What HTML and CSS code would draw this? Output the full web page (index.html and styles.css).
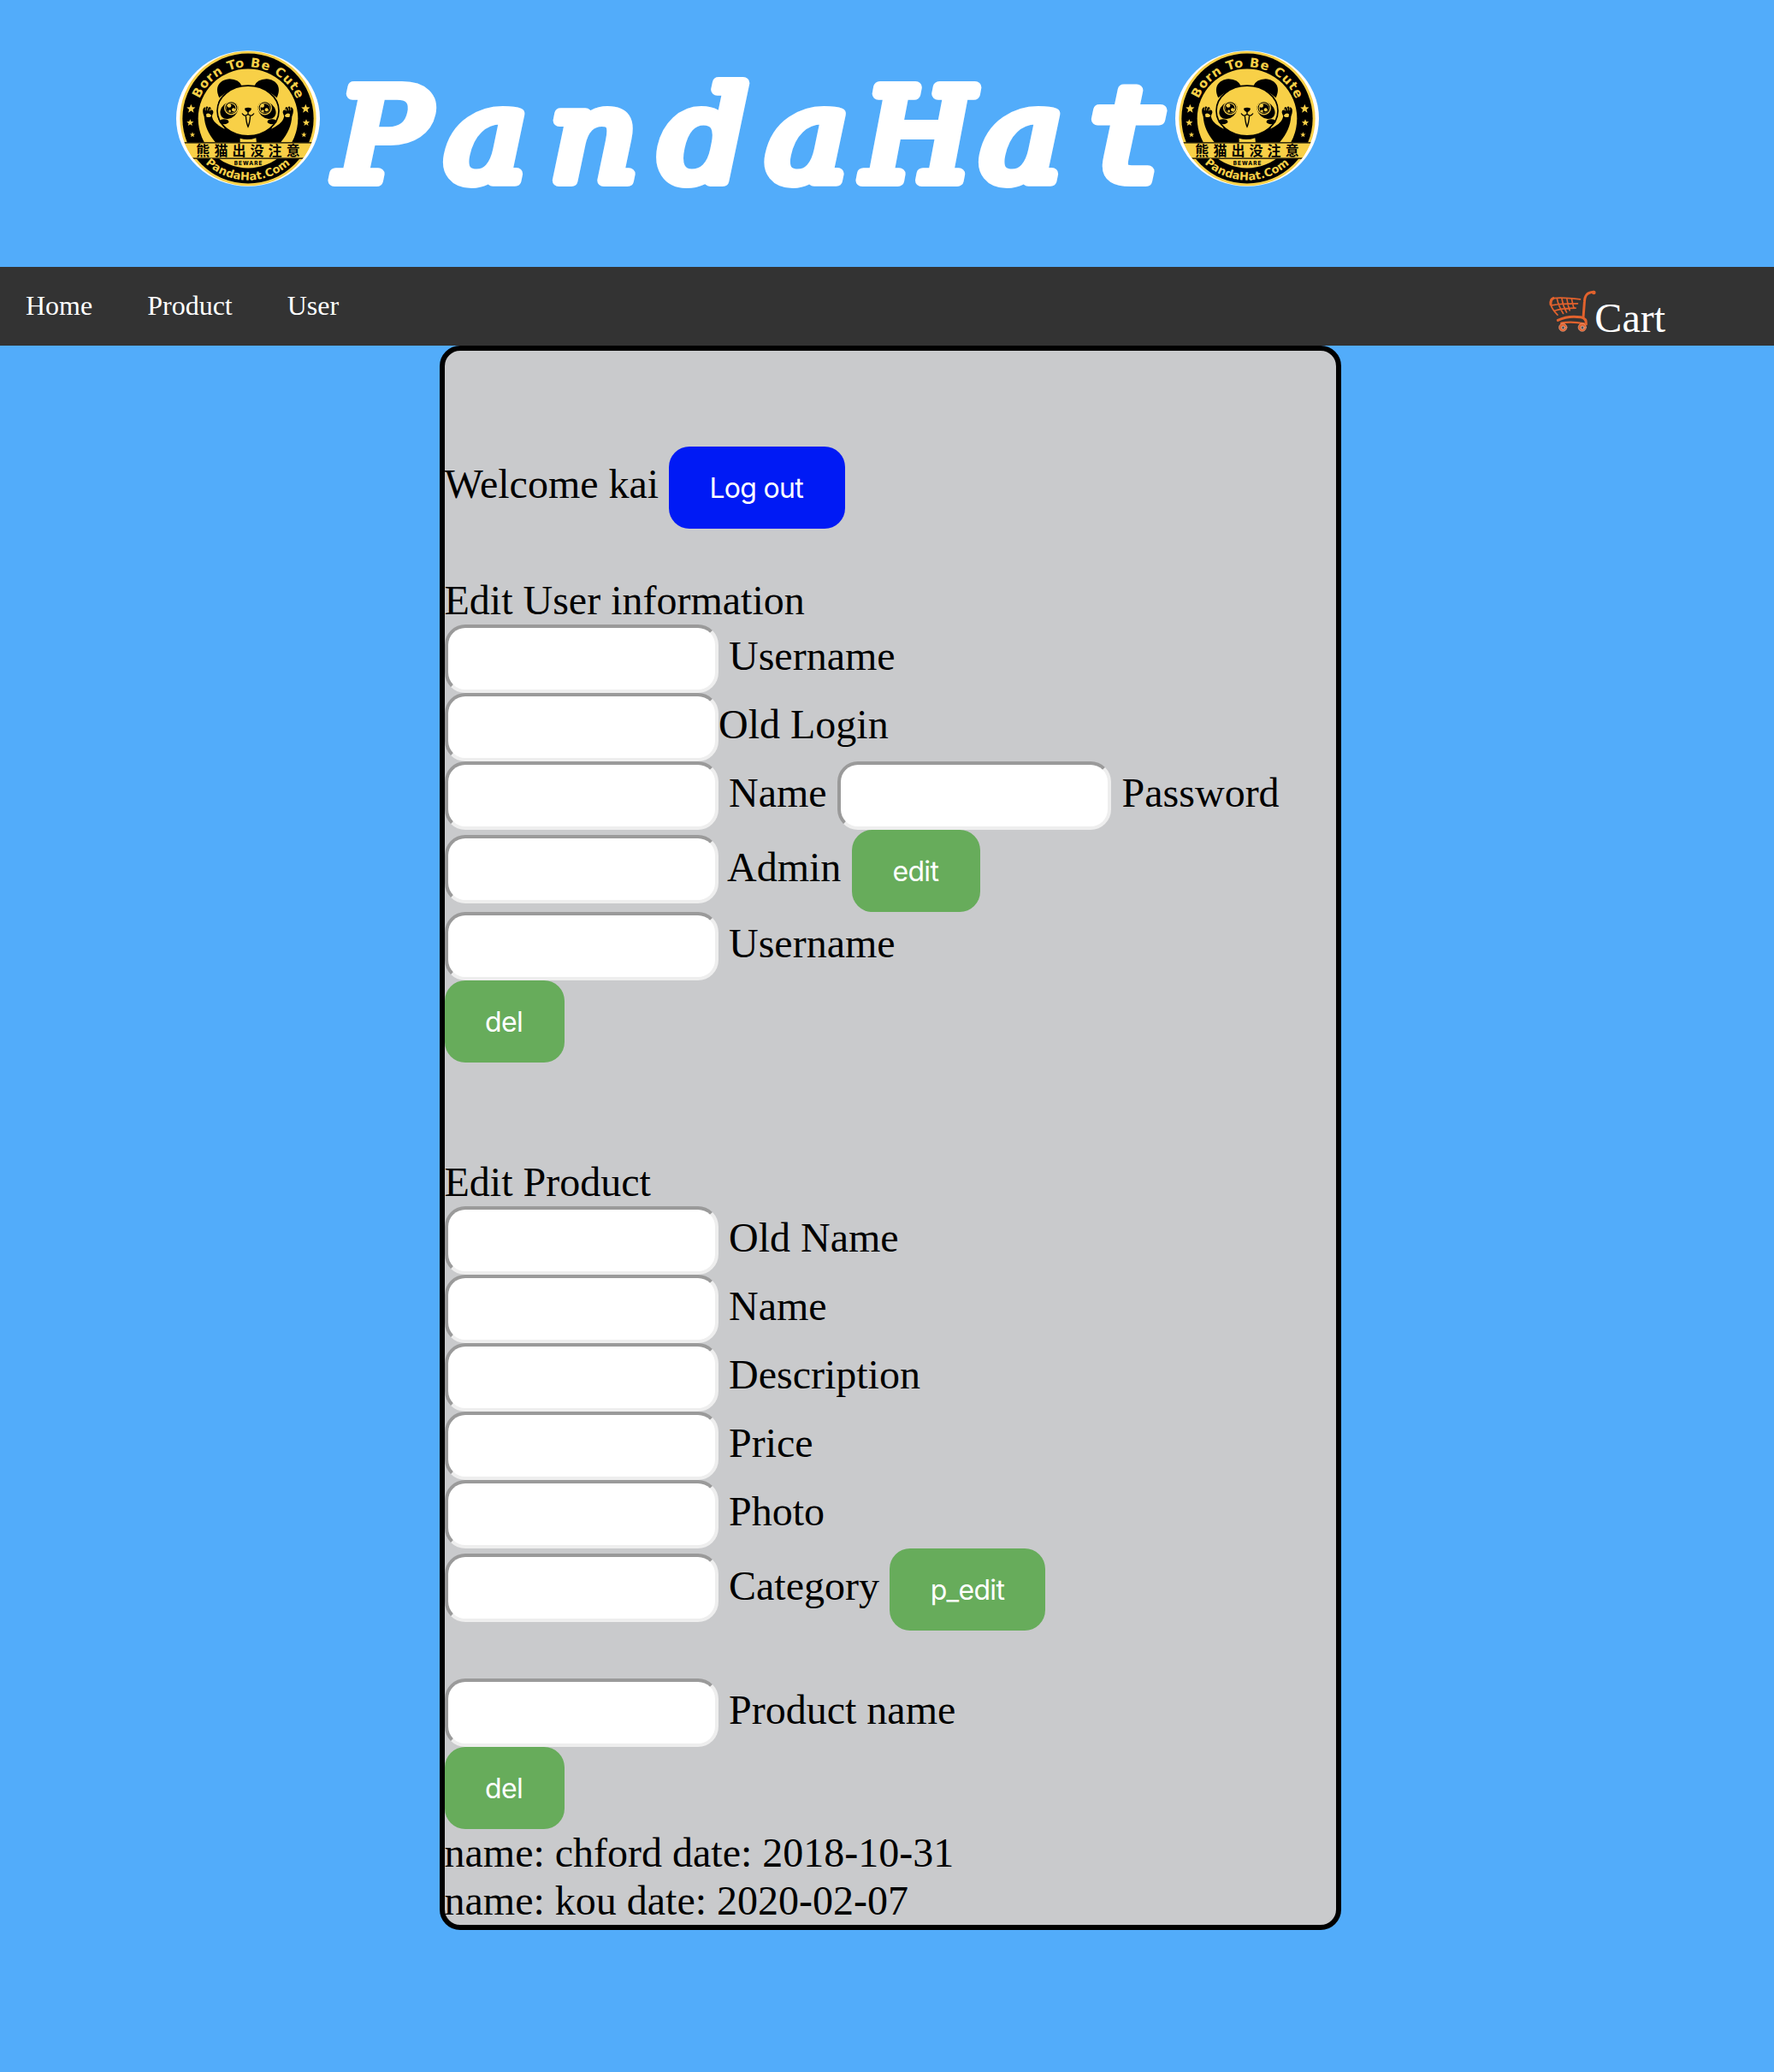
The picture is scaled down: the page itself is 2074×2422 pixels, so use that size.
FILE: index.html
```html
<!DOCTYPE html>
<html lang="en">
<head>
<meta charset="utf-8">
<title>PandaHat</title>
<link rel="stylesheet" href="styles.css">
</head>
<body>
<svg width="0" height="0" class="defs" aria-hidden="true">
  <defs>
    <path id="arc-top" d="M130 227A185 185 0 0 1 470 227"/>
    <path id="arc-bottom" d="M150 454A222 222 0 0 0 450 454"/>
    <path id="star" d="M0-16L4.2-5.5L15.4-5L6.7 2.4L9.6 13.4L0 7L-9.6 13.4L-6.7 2.4L-15.4-5L-4.2-5.5Z"/>
    <clipPath id="disc"><ellipse cx="300" cy="296" rx="239" ry="236"/></clipPath>
    <g id="side">
      <path d="M146 289C140 275 140 262 146 258Q149 253 152 263Q151 252 156 254Q161 254 161 263Q163 253 168 257Q171 260 169 268Q176 263 178 272C179 280 172 284 174 291C178 310 198 323 222 334L262 380H186C160 350 148 320 146 289Z"/>
      <path class="gold" d="M153 281Q163 273 172 286Q166 295 154 290Z"/>
      <path class="gold" d="M151 268L150 260M158 268V259M165 270L167 262" stroke="#f8d047" stroke-width="2"/>
      <path d="M199 223C181 186 199 160 235 157Q269 158 278 182Q231 195 199 223Z"/>
    </g>
    <g id="eye">
      <ellipse cx="234" cy="267" rx="35" ry="27" transform="rotate(-42 234 267)"/>
      <ellipse cx="216" cy="307" rx="16" ry="9"/>
      <circle class="gold" cx="241" cy="259" r="25"/>
      <circle cx="241" cy="259" r="21"/>
      <circle class="gold" cx="241" cy="259" r="18"/>
      <circle cx="240" cy="260" r="16"/>
    </g>
    <symbol id="panda" viewBox="48 58 504 476">
      <ellipse cx="300" cy="296" rx="252" ry="238" fill="#fff"/>
      <ellipse class="gold" cx="300" cy="296" rx="239" ry="236"/>
      <ellipse cx="300" cy="296" rx="230" ry="228"/>
      <ellipse class="gold" cx="300" cy="296" rx="175" ry="174"/>
      <use href="#side"/>
      <use href="#side" transform="matrix(-1 0 0 1 600 0)"/>
      <path d="M215 325H385L362 382H238Z"/>
      <path class="gold" d="M272 366Q300 374 328 364L330 382H272Z"/>
      <ellipse class="gold" cx="300" cy="269" rx="108" ry="88" stroke="#000" stroke-width="5"/>
      <use href="#eye"/>
      <use href="#eye" transform="matrix(-1 0 0 1 600 0)"/>
      <g class="gold">
        <circle cx="234" cy="251" r="7"/><circle cx="249" cy="265" r="6"/><circle cx="236" cy="270" r="4"/>
        <circle cx="350" cy="251" r="7"/><circle cx="365" cy="265" r="6"/><circle cx="352" cy="270" r="4"/>
      </g>
      <path d="M288 261Q300 255 312 261Q311 271 300 274Q289 271 288 261Z"/>
      <path d="M300 272V281M279 278Q288 292 300 281Q312 292 321 278M292 285Q294 312 300 325Q306 312 308 285" fill="none" stroke="#000" stroke-width="4"/>
      <g clip-path="url(#disc)">
        <path class="gold" d="M48 380H552L520 437H80Z"/>
        <path d="M48 381H552M104 436H496" stroke="#000" stroke-width="4"/>
      </g>
      <g class="gold">
        <use href="#star" x="100" y="262"/><use href="#star" x="502" y="262"/>
        <use href="#star" transform="translate(97 311) scale(.8)"/><use href="#star" transform="translate(504 311) scale(.8)"/>
        <use href="#star" transform="translate(105 353) scale(.6)"/><use href="#star" transform="translate(496 353) scale(.6)"/>
      </g>
      <text class="badge-arc gold" font-size="44"><textPath href="#arc-top" textLength="432" lengthAdjust="spacing">Born To Be Cute</textPath></text>
      <text class="badge-arc gold" font-size="39"><textPath href="#arc-bottom" textLength="327" lengthAdjust="spacing">PandaHat.Com</textPath></text>
      <text class="badge-cjk" x="118" y="427" textLength="364">熊猫出没注意</text>
      <text class="badge-beware" x="251" y="459" textLength="98">BEWARE</text>
    </symbol>
  </defs>
</svg>

<header class="banner">
  <svg class="logo"><use href="#panda"/></svg>
  <h1 class="title">
    <svg class="wordmark" viewBox="0 0 1000 200">
      <text transform="scale(1.08 1)" x="68.5 180 296.5 416 527.5 648 759.5 873" y="152">Panda<tspan class="cap-h">H</tspan>a<tspan class="tee">t</tspan></text>
    </svg>
  </h1>
  <svg class="logo"><use href="#panda"/></svg>
</header>

<nav class="nav">
  <a>Home</a>
  <a>Product</a>
  <a>User</a>
  <a class="cart">
    <svg class="cart-icon" viewBox="94 88 164 148" fill="none" stroke="#e2622d" stroke-linecap="round">
      <circle cx="251" cy="97" r="7" fill="#e2622d" stroke="none"/>
      <path d="M250 95C226 97 219 108 218 130L214 183" stroke-width="9"/>
      <path d="M203 121C165 116 130 114 108 117Q95 120 98 137Q103 156 123 176" stroke-width="5"/>
      <path d="M108 117Q98 122 99 139" stroke-width="9"/>
      <path d="M103 142C130 136 165 136 194 136M112 161C135 154 160 152 187 152M121 118Q126 145 143 171M138 118Q142 145 155 167M156 119Q159 142 166 160M173 120Q176 137 180 150" stroke-width="5"/>
      <path d="M124 195Q160 177 205 184Q226 188 224 209" stroke-width="9"/>
      <path d="M136 205Q170 197 218 207" stroke-width="7"/>
      <g stroke="#e9a58b" stroke-width="2" fill="#e2622d"><ellipse cx="142" cy="220" rx="14" ry="14"/><ellipse cx="210" cy="220" rx="14" ry="14"/></g>
      <g stroke="#f0c0ae" stroke-width="2" fill="#555"><circle cx="143" cy="221" r="6"/><circle cx="211" cy="221" r="6"/></g>
    </svg><span>Cart</span>
  </a>
</nav>

<main class="panel">
  <form class="row with-button welcome"><label>Welcome kai</label><button class="btn logout" type="button">Log out</button></form>

  <div class="line section">Edit User information</div>
  <div class="row"><input><label>Username</label></div>
  <div class="row tight"><input><label>Old Login</label></div>
  <div class="row"><input><label>Name</label><input><label>Password</label></div>
  <div class="row with-button"><input><label class="kerned">Admin</label><button class="btn edit" type="button">edit</button></div>
  <div class="row"><input><label>Username</label></div>
  <button class="btn del" type="button">del</button>

  <div class="line section far">Edit Product</div>
  <div class="row"><input><label>Old Name</label></div>
  <div class="row"><input><label>Name</label></div>
  <div class="row"><input><label>Description</label></div>
  <div class="row"><input><label>Price</label></div>
  <div class="row"><input><label>Photo</label></div>
  <div class="row with-button"><input><label>Category</label><button class="btn p-edit" type="button">p_edit</button></div>
  <div class="row section"><input><label>Product name</label></div>
  <button class="btn del" type="button">del</button>

  <div class="line">name: chford date: 2018-10-31</div>
  <div class="line">name: kou date: 2020-02-07</div>
</main>
</body>
</html>
```
FILE: styles.css
```css
* { box-sizing: border-box; }

body {
  margin: 0;
  min-height: 2422px;
  background: #52acfa;
  color: #000;
  font-family: "Liberation Serif", "Times New Roman", serif;
  font-size: 48px;
  line-height: 56px;
}

.defs { display: block; height: 0; }
.gold { fill: #f8d047; }
.badge-arc { font-family: "DejaVu Sans", sans-serif; font-weight: 700; }
.badge-cjk { font-family: "Noto Sans CJK SC", sans-serif; font-weight: 700; font-size: 48px; }
.badge-beware { font-family: Inter, sans-serif; font-weight: 800; font-size: 19px; }

/* Banner */
.banner {
  display: flex;
  height: 312px;
  padding: 59px 0 0 206px;
}
.logo { flex: none; width: 168px; height: 159px; }
.title {
  width: 1000px;
  margin: 0;
}
.wordmark {
  display: block;
  width: 1000px;
  height: 200px;
  overflow: visible;
  fill: #fff;
  stroke: #fff;
  stroke-width: 14px;
  stroke-linejoin: round;
  text-anchor: middle;
  font-family: "DejaVu Serif", serif;
  font-style: italic;
  font-weight: 400;
  font-size: 150px;
}
.wordmark .cap-h { font-family: "DejaVu Serif Condensed", "DejaVu Serif", serif; }
.wordmark .tee { font-family: "DejaVu Sans Mono", monospace; }

/* Navigation */
.nav {
  display: flex;
  height: 92px;
  padding-left: 30px;
  gap: 64px;
  background: #333;
  color: #fff;
  font-size: 32px;
  line-height: 91px;
}
.cart {
  display: flex;
  margin-left: auto;
  padding: 27px 127px 0 0;
  font-size: 48px;
  line-height: 56px;
}
.cart span { padding-top: 5px; }
.cart-icon { width: 55px; height: 49px; margin-right: -2px; }

/* Panel */
.panel {
  width: 1054px;
  height: 1852px;
  margin-left: 513.5px;
  padding-top: 112px;
  border: 6px solid #000;
  border-radius: 24px;
  background: #c9cacc;
}
.row {
  display: flex;
  align-items: flex-start;
  gap: 12.5px;
  height: 80px;
}
.row label { padding-top: 9px; white-space: nowrap; }
.row.tight { gap: .5px; }
.row.welcome { gap: 11.5px; }
.row.with-button { height: 96px; }
.row.with-button label { padding-top: 16px; }
.row.with-button input { margin-top: 6px; }
.row .kerned { margin-left: -2px; }
.line { height: 56px; }
.section { margin-top: 56px; }
.section.far { margin-top: 112px; }

input {
  flex: none;
  width: 320px;
  height: 80px;
  margin: 0;
  border: 4px solid;
  border-color: #9a9a9a #eee #eee #9a9a9a;
  border-radius: 24px;
  background: #fff;
}
.btn {
  display: block;
  height: 96px;
  padding: 0 1px 0 0;
  border: 0;
  border-radius: 24px;
  background: #67ac5b;
  color: #fff;
  font-family: Inter, sans-serif;
  font-size: 32px;
  letter-spacing: -.7px;
}
.logout { width: 206px; background: #001af5; }
.edit { width: 150px; }
.p-edit { width: 182px; }
.del { width: 140px; }
```
